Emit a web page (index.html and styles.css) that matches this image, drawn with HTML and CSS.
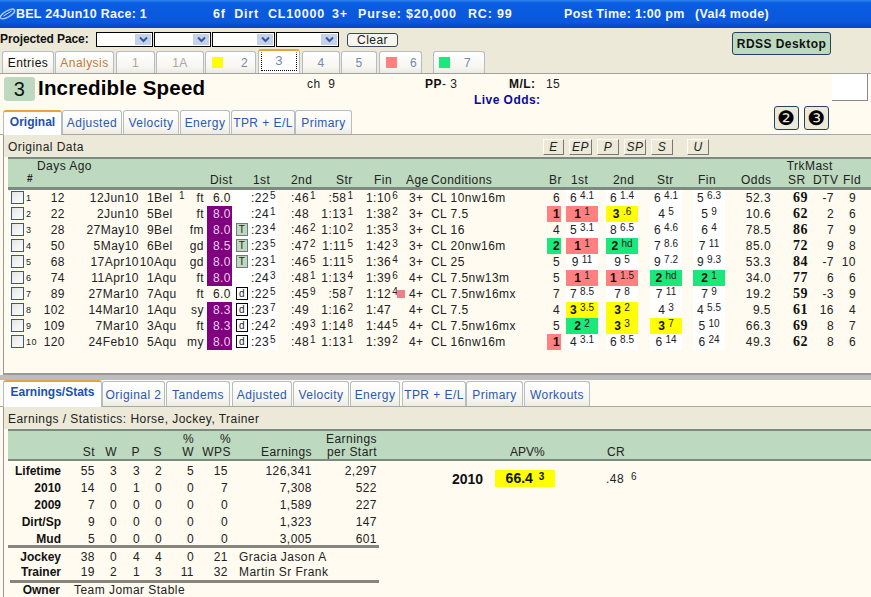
FILE: index.html
```html
<!DOCTYPE html>
<html lang="en">
<head>
    <meta charset="UTF-8">
    <title>Incredible Speed</title>
    <link rel="stylesheet" href="styles.css">
</head>
<body>

<div class="titlebar">
    <svg class="logo" width="15" height="18" viewBox="0 0 15 18"><ellipse cx="7" cy="9" rx="8" ry="3" transform="rotate(-30 7 9)" fill="none" stroke="#9fc4f0" stroke-width="1.5"/><path d="M3 11l8-5" stroke="#d8e8fa"/></svg>
    <span class="t1">BEL 24Jun10 Race: 1</span>
    <span class="t2">6f&nbsp; Dirt</span>
    <span class="t3">CL10000</span>
    <span class="t4">3+</span>
    <span class="t5">Purse: $20,000</span>
    <span class="t6">RC: 99</span>
    <span class="t7">Post Time: 1:00 pm</span>
    <span class="t8">(Val4 mode)</span>
</div>

<div class="topbar">
    <div class="pace-row">
        <strong class="pace-label">Projected Pace:</strong>
        <div class="combo c1"><span class="combo-btn"><svg width="9" height="7" viewBox="0 0 9 7"><path d="M1 1.5l3.5 3.5 3.5-3.5" fill="none" stroke="#3a5a9a" stroke-width="2"/></svg></span></div>
        <div class="combo c1"><span class="combo-btn"><svg width="9" height="7" viewBox="0 0 9 7"><path d="M1 1.5l3.5 3.5 3.5-3.5" fill="none" stroke="#3a5a9a" stroke-width="2"/></svg></span></div>
        <div class="combo c2"><span class="combo-btn"><svg width="9" height="7" viewBox="0 0 9 7"><path d="M1 1.5l3.5 3.5 3.5-3.5" fill="none" stroke="#3a5a9a" stroke-width="2"/></svg></span></div>
        <div class="combo c2"><span class="combo-btn"><svg width="9" height="7" viewBox="0 0 9 7"><path d="M1 1.5l3.5 3.5 3.5-3.5" fill="none" stroke="#3a5a9a" stroke-width="2"/></svg></span></div>
        <button class="clear-btn">Clear</button>
        <button class="rdss-btn">RDSS Desktop</button>
    </div>
    <div class="race-tabs">
        <div class="tab black w-entries">Entries</div>
        <div class="tab orange w-analysis">Analysis</div>
        <div class="tab grey w-1">1</div>
        <div class="tab grey w-1a">1A</div>
        <div class="tab slate w-2"><span class="swatch yellow"></span><span>2</span></div>
        <div class="tab slate active w-3"><span class="dotted">3</span></div>
        <div class="tab slate w-4">4</div>
        <div class="tab slate w-5">5</div>
        <div class="tab slate w-6"><span class="swatch pink"></span><span>6</span></div>
        <div class="tab slate w-7"><span class="swatch green"></span><span>7</span></div>
    </div>
</div>

<div class="horse-head">
    <div class="post">3</div>
    <div class="horse-name">Incredible Speed</div>
    <div class="horse-info">
        <span class="info-ch">ch&nbsp; 9</span>
        <span class="info-pp"><b>PP</b>- 3</span>
        <span class="info-ml"><b>M/L:</b></span>
        <span class="info-val">15</span>
        <b class="live-odds">Live Odds:</b>
    </div>
    <div class="blank-box"></div>
</div>

<div class="tab-row">
    <div class="tab blue on w-original">Original</div>
    <div class="tab blue w-adjusted">Adjusted</div>
    <div class="tab blue w-velocity">Velocity</div>
    <div class="tab blue w-energy">Energy</div>
    <div class="tab blue w-tpr">TPR + E/L</div>
    <div class="tab blue w-primary">Primary</div>
    <button class="round-btn first">❷</button>
    <button class="round-btn">❸</button>
</div>

<div class="panel pp-panel">
    <div class="panel-title">
        <span class="pt-text">Original Data</span>
        <button class="style-btn w20">E</button>
        <button class="style-btn w23">EP</button>
        <button class="style-btn w22">P</button>
        <button class="style-btn w22">SP</button>
        <button class="style-btn w22">S</button>
        <button class="style-btn w22 gap">U</button>
    </div>
    <div class="pp-head">
        <div class="ph-row">
            <span class="ph-days">Days Ago</span>
            <span class="ph-trk">TrkMast</span>
        </div>
        <div class="ph-row ph-grid">
            <span class="hash">#</span><span>Dist</span><span>1st</span><span>2nd</span><span>Str</span><span>Fin</span><span>Age</span><span>Conditions</span><span>Br</span><span>1st</span><span>2nd</span><span>Str</span><span>Fin</span><span>Odds</span><span>SR</span><span>DTV</span><span>Fld</span>
        </div>
    </div>
    <div class="pp-rows">
        <div class="pp"><span class="chk"></span><span class="no">1</span><span class="r">12</span><span class="r">12Jun10</span><span class="r">1</span><span>Bel</span><span class="s1"><sup>1</sup></span><span class="r">ft</span><span class="dist">6.0</span><span class="flag"></span><span class="fr1">:22<sup>5</sup></span><span class="fr2">:46<sup>1</sup></span><span class="r">:58<sup>1</sup></span><span class="fr2">1:10<sup>6</sup></span><span></span><span class="age">3+</span><span>CL 10nw16m</span><span class="br">6</span><span class="c">6<sup>4.1</sup></span><span class="c">6<sup>1.4</sup></span><span class="c cs">6<sup>4.1</sup></span><span class="c cf">5<sup>6.3</sup></span><span class="r">52.3</span><span class="sr">69</span><span class="r">-7</span><span class="r">9</span></div>
        <div class="pp"><span class="chk"></span><span class="no">2</span><span class="r">22</span><span class="r">2Jun10</span><span class="r">5</span><span>Bel</span><span class="s1"></span><span class="r">ft</span><span class="dist long">8.0</span><span class="flag"></span><span class="fr1">:24<sup>1</sup></span><span class="fr2">:48</span><span class="r">1:13<sup>1</sup></span><span class="fr2">1:38<sup>2</sup></span><span></span><span class="age">3+</span><span>CL 7.5</span><span class="br bg-pink"><b>1</b></span><span class="c bg-pink"><b>1</b><sup>1</sup></span><span class="c bg-yellow"><b>3</b><sup>.6</sup></span><span class="c cs">4<sup>5</sup></span><span class="c cf">5<sup>9</sup></span><span class="r">10.6</span><span class="sr">62</span><span class="r">2</span><span class="r">6</span></div>
        <div class="pp"><span class="chk"></span><span class="no">3</span><span class="r">28</span><span class="r">27May10</span><span class="r">9</span><span>Bel</span><span class="s1"></span><span class="r">fm</span><span class="dist long">8.0</span><span class="flag"><i class="badge t">T</i></span><span class="fr1">:23<sup>4</sup></span><span class="fr2">:46<sup>2</sup></span><span class="r">1:10<sup>2</sup></span><span class="fr2">1:35<sup>3</sup></span><span></span><span class="age">3+</span><span>CL 16</span><span class="br">4</span><span class="c">5<sup>3.1</sup></span><span class="c">8<sup>6.5</sup></span><span class="c cs">6<sup>4.6</sup></span><span class="c cf">6<sup>4</sup></span><span class="r">78.5</span><span class="sr">86</span><span class="r">7</span><span class="r">9</span></div>
        <div class="pp"><span class="chk"></span><span class="no">4</span><span class="r">50</span><span class="r">5May10</span><span class="r">6</span><span>Bel</span><span class="s1"></span><span class="r">gd</span><span class="dist long">8.5</span><span class="flag"><i class="badge t">T</i></span><span class="fr1">:23<sup>5</sup></span><span class="fr2">:47<sup>2</sup></span><span class="r">1:11<sup>5</sup></span><span class="fr2">1:42<sup>3</sup></span><span></span><span class="age">3+</span><span>CL 20nw16m</span><span class="br bg-green"><b>2</b></span><span class="c bg-pink"><b>1</b><sup>1</sup></span><span class="c bg-green"><b>2</b><sup>hd</sup></span><span class="c cs">7<sup>8.6</sup></span><span class="c cf">7<sup>11</sup></span><span class="r">85.0</span><span class="sr">72</span><span class="r">9</span><span class="r">8</span></div>
        <div class="pp"><span class="chk"></span><span class="no">5</span><span class="r">68</span><span class="r">17Apr10</span><span class="r">10</span><span>Aqu</span><span class="s1"></span><span class="r">gd</span><span class="dist long">8.0</span><span class="flag"><i class="badge t">T</i></span><span class="fr1">:23<sup>1</sup></span><span class="fr2">:46<sup>5</sup></span><span class="r">1:11<sup>5</sup></span><span class="fr2">1:36<sup>4</sup></span><span></span><span class="age">3+</span><span>CL 25</span><span class="br">5</span><span class="c">9<sup>11</sup></span><span class="c">9<sup>5</sup></span><span class="c cs">9<sup>7.2</sup></span><span class="c cf">9<sup>9.3</sup></span><span class="r">53.3</span><span class="sr">84</span><span class="r">-7</span><span class="r">10</span></div>
        <div class="pp"><span class="chk"></span><span class="no">6</span><span class="r">74</span><span class="r">11Apr10</span><span class="r">1</span><span>Aqu</span><span class="s1"></span><span class="r">ft</span><span class="dist long">8.0</span><span class="flag"></span><span class="fr1">:24<sup>3</sup></span><span class="fr2">:48<sup>1</sup></span><span class="r">1:13<sup>4</sup></span><span class="fr2">1:39<sup>6</sup></span><span></span><span class="age">4+</span><span>CL 7.5nw13m</span><span class="br">5</span><span class="c bg-pink"><b>1</b><sup>1</sup></span><span class="c bg-pink"><b>1</b><sup>1.5</sup></span><span class="c cs bg-green"><b>2</b><sup>hd</sup></span><span class="c cf bg-green"><b>2</b><sup>1</sup></span><span class="r">34.0</span><span class="sr">77</span><span class="r">6</span><span class="r">6</span></div>
        <div class="pp"><span class="chk"></span><span class="no">7</span><span class="r">89</span><span class="r">27Mar10</span><span class="r">7</span><span>Aqu</span><span class="s1"></span><span class="r">ft</span><span class="dist">6.0</span><span class="flag"><i class="badge d">d</i></span><span class="fr1">:22<sup>5</sup></span><span class="fr2">:45<sup>9</sup></span><span class="r">:58<sup>7</sup></span><span class="fr2">1:12<sup>4</sup></span><span><i class="mark"></i></span><span class="age">4+</span><span>CL 7.5nw16mx</span><span class="br">7</span><span class="c">7<sup>8.5</sup></span><span class="c">7<sup>8</sup></span><span class="c cs">7<sup>11</sup></span><span class="c cf">7<sup>9</sup></span><span class="r">19.2</span><span class="sr">59</span><span class="r">-3</span><span class="r">9</span></div>
        <div class="pp"><span class="chk"></span><span class="no">8</span><span class="r">102</span><span class="r">14Mar10</span><span class="r">1</span><span>Aqu</span><span class="s1"></span><span class="r">sy</span><span class="dist long">8.3</span><span class="flag"><i class="badge d">d</i></span><span class="fr1">:23<sup>7</sup></span><span class="fr2">:49</span><span class="r">1:16<sup>2</sup></span><span class="fr2">1:47</span><span></span><span class="age">4+</span><span>CL 7.5</span><span class="br">4</span><span class="c bg-yellow"><b>3</b><sup>3.5</sup></span><span class="c bg-yellow"><b>3</b><sup>2</sup></span><span class="c cs">4<sup>3</sup></span><span class="c cf">4<sup>5.5</sup></span><span class="r">9.5</span><span class="sr">61</span><span class="r">16</span><span class="r">4</span></div>
        <div class="pp"><span class="chk"></span><span class="no">9</span><span class="r">109</span><span class="r">7Mar10</span><span class="r">3</span><span>Aqu</span><span class="s1"></span><span class="r">ft</span><span class="dist long">8.3</span><span class="flag"><i class="badge d">d</i></span><span class="fr1">:24<sup>2</sup></span><span class="fr2">:49<sup>3</sup></span><span class="r">1:14<sup>8</sup></span><span class="fr2">1:44<sup>5</sup></span><span></span><span class="age">4+</span><span>CL 7.5nw16mx</span><span class="br">5</span><span class="c bg-green"><b>2</b><sup>2</sup></span><span class="c bg-yellow"><b>3</b><sup>3</sup></span><span class="c cs bg-yellow"><b>3</b><sup>7</sup></span><span class="c cf">5<sup>10</sup></span><span class="r">66.3</span><span class="sr">69</span><span class="r">8</span><span class="r">7</span></div>
        <div class="pp"><span class="chk"></span><span class="no">10</span><span class="r">120</span><span class="r">24Feb10</span><span class="r">5</span><span>Aqu</span><span class="s1"></span><span class="r">my</span><span class="dist long">8.0</span><span class="flag"><i class="badge d">d</i></span><span class="fr1">:23<sup>5</sup></span><span class="fr2">:48<sup>1</sup></span><span class="r">1:13<sup>1</sup></span><span class="fr2">1:39<sup>2</sup></span><span></span><span class="age">4+</span><span>CL 16nw16m</span><span class="br bg-pink"><b>1</b></span><span class="c">4<sup>3.1</sup></span><span class="c">6<sup>8.5</sup></span><span class="c cs">6<sup>14</sup></span><span class="c cf">6<sup>24</sup></span><span class="r">49.3</span><span class="sr">62</span><span class="r">8</span><span class="r">6</span></div>
    </div>
</div>

<div class="splitter"></div>

<div class="tab-row low">
    <div class="tab blue on w-earn">Earnings/Stats</div>
    <div class="tab blue w-orig2">Original 2</div>
    <div class="tab blue w-tand">Tandems</div>
    <div class="tab blue w-adj2">Adjusted</div>
    <div class="tab blue w-vel2">Velocity</div>
    <div class="tab blue w-en2">Energy</div>
    <div class="tab blue w-tpr2">TPR + E/L</div>
    <div class="tab blue w-prim2">Primary</div>
    <div class="tab blue w-work">Workouts</div>
</div>

<div class="panel stats-panel">
    <div class="panel-title short"><span class="pt-text">Earnings / Statistics: Horse, Jockey, Trainer</span></div>
    <div class="st-head">
        <div class="st st-h">
            <span></span><span class="r">St</span><span class="r">W</span><span class="r">P</span><span class="r">S</span><span class="r">%<br>W</span><span class="r wps">%<br>WPS</span><span class="r">Earnings</span><span class="r">Earnings<br>per Start</span>
            <span class="apv-h">APV%</span><span>CR</span>
        </div>
    </div>
    <div class="st-body">
        <div class="st-left">
            <div class="st"><b class="r">Lifetime</b><span class="r">55</span><span class="r">3</span><span class="r">3</span><span class="r">2</span><span class="r">5</span><span class="r">15</span><span class="r">126,341</span><span class="r">2,297</span></div>
            <div class="st"><b class="r">2010</b><span class="r">14</span><span class="r">0</span><span class="r">1</span><span class="r">0</span><span class="r">0</span><span class="r">7</span><span class="r">7,308</span><span class="r">522</span></div>
            <div class="st"><b class="r">2009</b><span class="r">7</span><span class="r">0</span><span class="r">0</span><span class="r">0</span><span class="r">0</span><span class="r">0</span><span class="r">1,589</span><span class="r">227</span></div>
            <div class="st"><b class="r">Dirt/Sp</b><span class="r">9</span><span class="r">0</span><span class="r">0</span><span class="r">0</span><span class="r">0</span><span class="r">0</span><span class="r">1,323</span><span class="r">147</span></div>
            <div class="st st-last"><b class="r">Mud</b><span class="r">5</span><span class="r">0</span><span class="r">0</span><span class="r">0</span><span class="r">0</span><span class="r">0</span><span class="r">3,005</span><span class="r">601</span></div>
            <div class="st st-conn first-conn"><b class="r">Jockey</b><span class="r">38</span><span class="r">0</span><span class="r">4</span><span class="r">4</span><span class="r">0</span><span class="r">21</span><span class="conn-name">Gracia Jason A</span></div>
            <div class="st st-conn last-conn"><b class="r">Trainer</b><span class="r">19</span><span class="r">2</span><span class="r">1</span><span class="r">3</span><span class="r">11</span><span class="r">32</span><span class="conn-name">Martin Sr Frank</span></div>
            <div class="owner"><b class="owner-label">Owner</b><span>Team Jomar Stable</span></div>
        </div>
        <div class="st-right">
            <b class="apv-year">2010</b>
            <span class="apv-box"><b>66.4</b><sup><b>3</b></sup></span>
            <span class="cr-val">.48<sup>6</sup></span>
        </div>
    </div>
</div>

</body>
</html>
```

FILE: styles.css
```css
* {
    box-sizing: border-box;
}

html, body {
    margin: 0;
    width: 871px;
    height: 597px;
    overflow: hidden;
}

body {
    background: #fffbf0;
    color: #222;
    font-family: "Liberation Sans", Arial, sans-serif;
    font-size: 12px;
    letter-spacing: .45px;
}

button {
    font-family: inherit;
    letter-spacing: inherit;
    padding: 0;
}

b, strong {
    color: #111;
}

.r {
    text-align: right;
}

/* title bar */
.titlebar {
    height: 28px;
    display: flex;
    align-items: center;
    background: linear-gradient(#2f86f0 0, #0a5ce0 3px, #0a58dc 22px, #0644c4 100%);
    color: #f4f8ff;
    font-weight: bold;
    font-size: 12.5px;
    letter-spacing: .8px;
    white-space: nowrap;
}

.logo {
    flex: none;
    width: 16px;
}

.t1 { width: 197px; letter-spacing: .25px; }
.t2 { width: 55px; }
.t3 { width: 64px; }
.t4 { width: 26px; }
.t5 { width: 110px; }
.t6 { width: 96px; }
.t7 { width: 131px; letter-spacing: .35px; }
.t8 { letter-spacing: .35px; }

/* top bar */
.topbar {
    height: 46px;
    background: #ece9d8;
    border-bottom: 1px solid #a0a0a0;
}

.pace-row {
    height: 23px;
    display: flex;
    align-items: flex-start;
    padding-top: 4px;
}

.pace-label {
    width: 96px;
    line-height: 15px;
    letter-spacing: -.1px;
    white-space: nowrap;
}

.combo {
    height: 15px;
    background: #fff;
    border: 1px solid #000;
    display: flex;
    justify-content: flex-end;
    margin-right: 1px;
}

.c1 { width: 57px; }
.c2 { width: 63px; }

.combo-btn {
    width: 16px;
    margin: 1px;
    display: flex;
    align-items: center;
    justify-content: center;
    background: #c4d2ec;
}

.clear-btn {
    width: 51px;
    height: 14px;
    margin: 1px 0 0 7px;
    font-size: 12px;
    line-height: 12px;
    color: #222;
    background: #f6f5ee;
    border: 1px solid #3a4a5a;
    border-radius: 3px;
}

.rdss-btn {
    width: 99px;
    height: 23px;
    margin-left: 334px;
    background: #bdd9bf;
    border: 1px solid #27425e;
    border-radius: 3px;
    font-weight: bold;
    font-size: 12px;
    color: #111;
}

.race-tabs,
.tab-row {
    display: flex;
    align-items: flex-end;
    padding-left: 2px;
}

.race-tabs {
    height: 22px;
}

/* tabs */
.tab {
    height: 22px;
    display: flex;
    align-items: center;
    justify-content: center;
    flex: none;
    background: linear-gradient(#fff, #f7f6f0 70%, #ecebe2);
    border: 1px solid #b4bcc4;
    border-bottom: 0;
    border-radius: 3px 3px 0 0;
    margin-right: 1px;
    white-space: nowrap;
}

.black { color: #111; }
.orange { color: #c07a38; }
.grey { color: #a8a8a0; }
.slate { color: #7488b4; }
.blue { color: #2a58b0; }

.w-entries { width: 52px; }
.w-analysis { width: 59px; margin-right: 2px; }
.w-1 { width: 39px; }
.w-1a { width: 48px; }
.w-2 { width: 51px; justify-content: flex-start; gap: 18px; padding-left: 6px; margin-right: 2px; }
.w-3 { width: 42px; margin-right: 2px; }
.w-4 { width: 38px; }
.w-5 { width: 36px; margin-right: 2px; }
.w-6 { width: 43px; justify-content: flex-start; gap: 13px; padding-left: 6px; margin-right: 11px; }
.w-7 { width: 52px; justify-content: flex-start; gap: 14px; padding-left: 5px; }

.swatch {
    width: 11px;
    height: 11px;
}

.swatch.yellow { background: #ffff00; }
.swatch.pink { background: #ff8080; }
.swatch.green { background: #1ae87a; }

.tab.active {
    height: 24px;
    background: #fff;
    border-top: 2px solid #e8a33a;
    font-size: 13px;
    padding: 0 2px 2px;
}

.dotted {
    width: 37px;
    height: 19px;
    line-height: 15px;
    text-align: center;
    border: 1px dotted #000;
    border-top-color: transparent;
}

/* horse header */
.horse-head {
    height: 32px;
    display: flex;
    background: #fffbf0;
    padding-left: 4px;
}

.post {
    width: 31px;
    height: 24px;
    margin-top: 3px;
    background: #bdd9bf;
    border-radius: 3px;
    text-align: center;
    font-size: 20px;
    line-height: 24px;
    color: #111;
}

.horse-name {
    width: 269px;
    margin-left: 3px;
    font-weight: bold;
    font-size: 20.5px;
    line-height: 28px;
    letter-spacing: .2px;
    color: #000;
    white-space: nowrap;
}

.horse-info {
    width: 525px;
    display: grid;
    grid-template-columns: 118px 84px 37px 1fr;
    grid-template-rows: 16px 16px;
    padding-top: 3px;
    white-space: nowrap;
}

.live-odds {
    grid-column: 2 / 4;
    color: #0a0a9a;
    margin-left: 49px;
}

.blank-box {
    width: 36px;
    height: 27px;
    background: #fff;
    border-right: 1px solid #8a8a80;
    border-bottom: 1px solid #8a8a80;
}

.tab-row {
    height: 29px;
    background: #fffbf0;
    padding-left: 3px;
    border-bottom: 1px solid #a8a8a0;
}

.tab-row .tab {
    height: 24px;
    padding-top: 1px;
}

.tab-row .tab.on {
    height: 25px;
    background: #fff;
    border: 1px solid #b4bcc4;
    border-top: 2px solid #e8a33a;
    border-bottom: 0;
    font-weight: bold;
    font-size: 12px;
    margin-bottom: -1px;
    padding: 0 0 4px;
    color: #2050b0;
    letter-spacing: 0;
}

.w-original { width: 59px; margin-right: 0; }
.w-adjusted { width: 60px; }
.w-velocity { width: 56px; }
.w-energy { width: 50px; }
.w-tpr { width: 64px; margin-right: 0; }
.w-primary { width: 57px; }

.round-btn {
    width: 25px;
    height: 24px;
    align-self: flex-start;
    background: #ece9d8;
    border: 1px solid #27425e;
    border-radius: 3px;
    font-family: "DejaVu Sans", sans-serif;
    font-size: 20px;
    line-height: 20px;
    color: #000;
    margin-left: 5px;
}

.round-btn.first {
    margin-left: 421px;
}

/* panels */
.panel {
    margin-left: 3px;
    border-left: 1px solid #999;
    padding-left: 4px;
    background: #ece9d8;
}

.pp-panel {
    height: 240px;
    border-bottom: 2px solid #999;
    background: linear-gradient(#ece9d8 22px, #fffbf0 22px);
}

.stats-panel {
    height: 190px;
    background: linear-gradient(#ece9d8 22px, #fffbf0 22px);
}

.panel-title {
    height: 22px;
    display: flex;
    align-items: center;
    padding-top: 1px;
}

.pt-text {
    width: 535px;
    white-space: nowrap;
}

.panel-title.short .pt-text {
    width: auto;
}

.style-btn {
    height: 16px;
    margin-right: 5px;
    background: #ece9d8;
    border: 1px solid;
    border-color: #fff #777 #777 #fff;
    font-style: italic;
    font-size: 12px;
    color: #222;
}

.w20 { width: 21px; }
.w23 { width: 23px; }
.w22 { width: 22px; }
.gap { margin-left: 9px; }

/* past performance table */
.pp-head {
    height: 33px;
    padding-left: 3px;
    background: #bdd9bf;
    border-top: 2px solid #7d8a80;
    border-bottom: 3px solid #7d8a80;
}

.ph-row {
    height: 14px;
}

.ph-days {
    margin-left: 26px;
}

.ph-trk {
    margin-left: 691px;
}

.ph-grid {
    display: grid;
    grid-template-columns: 183px 43px 38px 45px 38px 32px 25px 118px 22px 42px 44px 41px 43px 47px 25px 30px 20px;
    padding-left: 16px;
    white-space: nowrap;
}

.hash {
    font-weight: bold;
    font-size: 10px;
}

.pp-rows {
    padding-left: 3px;
}

.pp {
    height: 16px;
    display: grid;
    grid-template-columns: 14px 15px 25px 74px 15px 24px 8px 18px 28px 18px 28px 42px 33px 43px 12px 23px 115px 16px 40px 40px 44px 43px 42px 37px 26px 22px;
    line-height: 16px;
    white-space: nowrap;
}

.pp sup,
.st-right sup {
    font-size: 10px;
    line-height: 0;
    vertical-align: 3px;
    margin-left: 1px;
    letter-spacing: 0;
}

.pp .c sup {
    margin-left: 3px;
}

.chk {
    width: 13px;
    height: 13px;
    margin-top: 1px;
    background: linear-gradient(135deg, #e4e4e0, #fff);
    border: 1px solid #3a5a80;
}

.no {
    font-size: 9px;
    padding-left: 1px;
}

.dist {
    margin-left: 3px;
    text-align: right;
    padding-right: 1px;
}

.dist.long {
    background: #800080;
    color: #e8d0e8;
}

.flag {
    background: #fff;
    padding: 1px 0 0 4px;
}

.fr1 {
    background: #fff;
    padding-left: 1px;
}

.fr2 {
    padding-left: 13px;
}

.badge {
    display: block;
    width: 12px;
    height: 13px;
    border: 1px solid #000;
    font-style: normal;
    font-size: 10px;
    line-height: 11px;
    text-align: center;
}

.badge.t {
    background: #bdd9bf;
    border-color: #777;
}

.badge.d {
    background: #fff;
}

.mark {
    display: block;
    width: 8px;
    height: 8px;
    margin: 4px 0 0 1px;
    background: #f08088;
}

.age {
    padding-left: 1px;
}

.br {
    margin: 0 1px;
    text-align: right;
    padding-right: 1px;
}

.c {
    margin: 0 4px;
    text-align: center;
    background: #fff;
}

.c.cs {
    margin: 0 4px 0 8px;
}

.c.cf {
    margin: 0 4px 0 7px;
}

.bg-pink,
.c.bg-pink { background: #ff8080; }
.bg-yellow,
.c.bg-yellow { background: #ffff00; }
.bg-green,
.c.bg-green { background: #1ae87a; }

.sr {
    text-align: right;
    font-family: "Liberation Serif", serif;
    font-weight: bold;
    font-size: 14px;
    color: #111;
}

.splitter {
    height: 5px;
    background: #bdbdbd;
}

/* earnings / stats */
.tab-row.low {
    height: 27px;
}

.tab-row.low .tab {
    height: 25px;
}

.tab-row.low .tab.on {
    height: 27px;
    padding-bottom: 5px;
    font-size: 12px;
}

.tab-row .w-earn { width: 99px; margin-right: 0; }
.w-orig2 { width: 63px; }
.w-tand { width: 64px; margin-right: 2px; }
.w-adj2 { width: 60px; }
.w-vel2 { width: 56px; }
.w-en2 { width: 50px; margin-right: 2px; }
.w-tpr2 { width: 64px; margin-right: 0; }
.w-prim2 { width: 57px; }
.w-work { width: 66px; }

.st-head {
    height: 32px;
    background: #bdd9bf;
    border-top: 2px solid #7d8a80;
    border-bottom: 2px solid #7d8a80;
}

.st {
    display: grid;
    grid-template-columns: 53px 34px 22px 23px 22px 32px 34px 84px 65px;
    height: 17px;
    line-height: 17px;
    white-space: nowrap;
}

.st b {
    letter-spacing: 0;
}

.st-h {
    height: 27px;
    line-height: 12.5px;
    align-items: end;
    grid-template-columns: 53px 34px 22px 23px 22px 32px 34px 84px 65px 230px 60px;
}

.wps {
    margin-right: -3px;
}

.apv-h {
    padding-left: 133px;
    letter-spacing: 0;
}

.st-body {
    display: flex;
    padding-top: 2px;
    background: #fffbf0;
}

.st-left {
    width: 371px;
    flex: none;
}

.st-last {
    border-bottom: 3px solid #85857d;
}

.st-conn {
    height: 15px;
    line-height: 15px;
}

.first-conn {
    margin-top: 2px;
}

.last-conn {
    height: 18px;
    background: linear-gradient(#85857d, #85857d) no-repeat 2px 100% / calc(100% - 2px) 3px;
}

.conn-name {
    grid-column: 8 / 10;
    padding-left: 11px;
}

.owner {
    display: flex;
    line-height: 15px;
}

.owner-label {
    width: 52px;
    text-align: right;
    margin-right: 14px;
    letter-spacing: 0;
}

.st-right {
    display: flex;
    align-items: flex-start;
    padding-top: 7px;
    margin-left: 73px;
    line-height: 17px;
}

.apv-year {
    font-size: 14px;
    width: 43px;
    letter-spacing: 0;
    margin-top: 1px;
}

.apv-box {
    width: 60px;
    height: 17px;
    background: #ffff00;
    text-align: center;
    font-size: 14px;
    letter-spacing: 0;
}

.st-right .apv-box sup {
    font-size: 10px;
    margin-left: 6px;
}

.cr-val {
    margin-left: 51px;
    font-size: 12px;
    padding-top: 1px;
}

.st-right .cr-val sup {
    margin-left: 7px;
}
```
